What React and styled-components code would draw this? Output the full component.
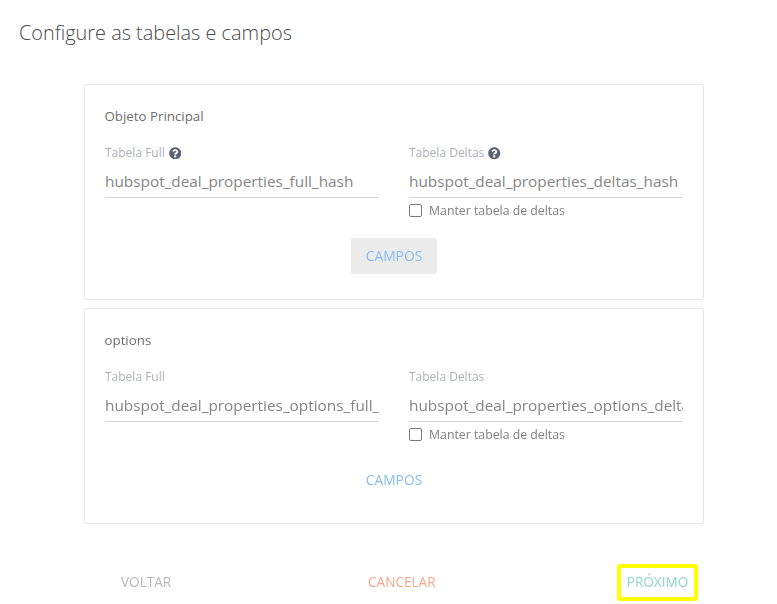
import React from "react";
import styled, { createGlobalStyle } from "styled-components";
import { FaQuestionCircle } from "react-icons/fa";

const Global = createGlobalStyle`
  html, body { margin: 0; padding: 0; background: #fff; }
  body { font-family: "Open Sans", "Liberation Sans", sans-serif; }
`;

const Page = styled.div`
  width: 777px;
  height: 604px;
  box-sizing: border-box;
  padding: 19px 0 0 0;
  overflow: hidden;
`;

const Title = styled.h1`
  margin: 0 0 0 19px;
  height: 27px;
  font-size: 19.9px;
  line-height: 27px;
  font-weight: 300;
  color: #4a4a4a;
`;

const Panels = styled.div`
  margin: 38px 0 0 84px;
  width: 620px;
  display: flex;
  flex-direction: column;
  gap: 8px;
  filter: blur(0.35px);
`;

const Panel = styled.section`
  box-sizing: border-box;
  height: 216px;
  padding: 21px 20px 0;
  border: 1px solid #e3e5ea;
  border-radius: 3px;
  background: #fff;
`;

const PanelTitle = styled.h2`
  margin: 0 0 0 -0.5px;
  font-size: 13.3px;
  line-height: 20px;
  font-weight: 400;
  color: #6e6e6e;
`;

const Fields = styled.div`
  margin-top: 19px;
  display: grid;
  grid-template-columns: 274px 274px;
  column-gap: 30px;
`;

const Field = styled.div`
  display: flex;
  flex-direction: column;
`;

const Label = styled.label`
  display: flex;
  align-items: center;
  gap: 4px;
  height: 16px;
  font-size: 12px;
  line-height: 16px;
  color: #aeb1b6;
`;

const Help = styled(FaQuestionCircle)`
  width: 12.5px;
  height: 12.5px;
  color: #5a6475;
`;

const Input = styled.input`
  box-sizing: border-box;
  width: 100%;
  height: 33px;
  margin-top: 4px;
  padding: 0 0 1px;
  border: 0;
  border-bottom: 1px solid #d5d7db;
  outline: none;
  background: transparent;
  font-family: inherit;
  font-size: 15.35px;
  color: #858585;
`;

const CheckRow = styled.label`
  display: flex;
  align-items: center;
  gap: 7px;
  height: 20px;
  margin-top: 2px;
  font-size: 12.3px;
  color: #808080;
`;

const CheckBox = styled.span`
  box-sizing: border-box;
  width: 13px;
  height: 13px;
  border: 1px solid #77797d;
  border-radius: 2px;
  background: #fff;
`;

const Center = styled.div`
  margin-top: 18px;
  display: flex;
  justify-content: center;
`;

const FieldsButton = styled.button`
  box-sizing: border-box;
  width: 86px;
  height: 36px;
  padding: 0 0 2px;
  border: 0;
  border-radius: 2px;
  background: ${(p) => (p.$disabled ? "#ebebeb" : "transparent")};
  font-family: inherit;
  font-size: 13.8px;
  color: #85bdf0;
`;

const Footer = styled.div`
  margin: 40px 0 0 121px;
  display: grid;
  grid-template-columns: 247px 249px 81px;
  align-items: start;
  justify-items: start;
`;

const FooterButton = styled.button`
  box-sizing: border-box;
  height: 36px;
  padding: 0 0 2px;
  border: 0;
  background: transparent;
  font-family: inherit;
  font-size: 13.6px;
  color: ${(p) => p.$color};
`;

const NextButton = styled(FooterButton)`
  width: 81px;
  height: 37px;
  border: 4px solid #ffff00;
  border-radius: 3px;
`;

const Caption = styled.span`
  display: inline-block;
  filter: blur(0.35px);
`;

const TableBlock = ({ title, full, deltas, help, active }) => (
  <Panel>
    <PanelTitle>{title}</PanelTitle>
    <Fields>
      <Field>
        <Label>Tabela Full {help && <Help />}</Label>
        <Input readOnly value={full} />
      </Field>
      <Field>
        <Label>Tabela Deltas {help && <Help />}</Label>
        <Input readOnly value={deltas} />
        <CheckRow>
          <CheckBox />
          Manter tabela de deltas
        </CheckRow>
      </Field>
    </Fields>
    <Center>
      <FieldsButton $disabled={active}>CAMPOS</FieldsButton>
    </Center>
  </Panel>
);

export default function App() {
  return (
    <Page>
      <Global />
      <Title>Configure as tabelas e campos</Title>
      <Panels>
        <TableBlock
          title="Objeto Principal"
          full="hubspot_deal_properties_full_hash"
          deltas="hubspot_deal_properties_deltas_hash"
          help
          active
        />
        <TableBlock
          title="options"
          full="hubspot_deal_properties_options_full_hash"
          deltas="hubspot_deal_properties_options_deltas_hash"
        />
      </Panels>
      <Footer>
        <FooterButton $color="#b3b5ba"><Caption>VOLTAR</Caption></FooterButton>
        <FooterButton $color="#f9a58b"><Caption>CANCELAR</Caption></FooterButton>
        <NextButton $color="#8fd6ca"><Caption>PRÓXIMO</Caption></NextButton>
      </Footer>
    </Page>
  );
}
